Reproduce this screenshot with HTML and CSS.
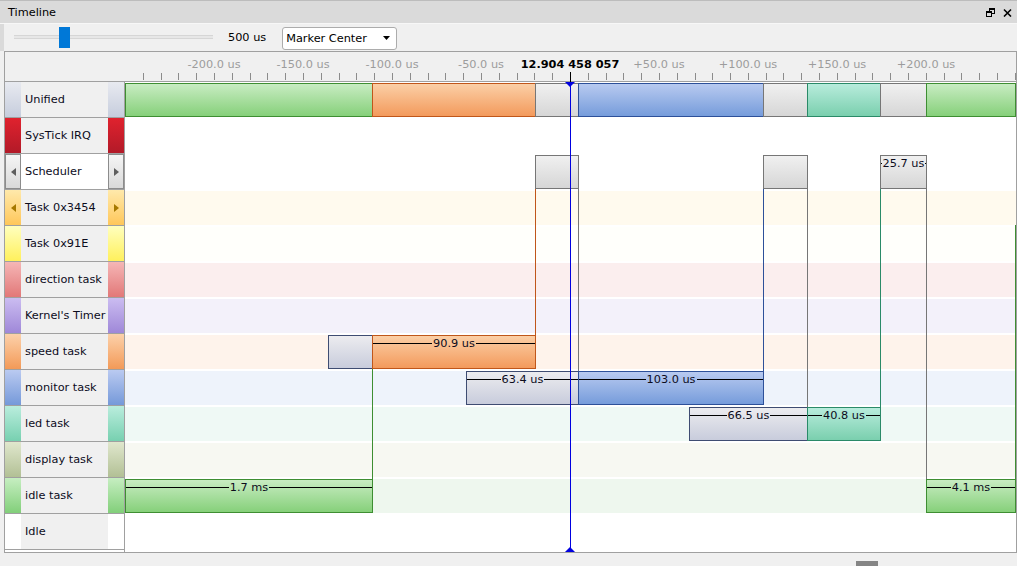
FILE: index.html
```html
<!DOCTYPE html>
<html>
<head>
<meta charset="utf-8">
<title>Timeline</title>
<link rel="stylesheet" href="styles.css">
</head>
<body>
<div class="app">
  <header class="titlebar">
    <span class="title">Timeline</span>
    <span class="win-btns">
      <svg class="ico" width="9" height="9" viewBox="0 0 9 9"><rect x="3.5" y="0.5" width="5" height="5" fill="none" stroke="#000"/><rect x="3" y="0" width="6" height="2" fill="#000"/><rect x="0.5" y="3.5" width="5" height="5" fill="#dadada" stroke="#000"/><rect x="0" y="3" width="6" height="2" fill="#000"/></svg>
      <svg class="ico" width="9" height="9" viewBox="0 0 9 9"><path d="M1 1.5L8 8.5M8 1.5L1 8.5" stroke="#000" stroke-width="1.6" fill="none"/></svg>
    </span>
  </header>

  <div class="toolbar">
    <div class="slider"><div class="thumb" style="margin-left:45px"></div></div>
    <span class="zoom-val">500 us</span>
    <div class="select">
      <span>Marker Center</span>
      <svg width="7" height="4" viewBox="0 0 7 4"><polygon points="0,0 7,0 3.5,4" fill="#000"/></svg>
    </div>
  </div>

  <div class="panel">
    <div class="ruler">
      <div class="ruler-labels">
        <span class="rl">-200.0 us</span>
        <span class="rl">-150.0 us</span>
        <span class="rl">-100.0 us</span>
        <span class="rl">-50.0 us</span>
        <span class="rl now">12.904 458 057</span>
        <span class="rl">+50.0 us</span>
        <span class="rl">+100.0 us</span>
        <span class="rl">+150.0 us</span>
        <span class="rl">+200.0 us</span>
      </div>
      <div class="ruler-ticks">
        <i></i><i></i><i></i><i></i><i></i><i></i><i></i><i></i><i></i><i></i>
        <i></i><i></i><i></i><i></i><i></i><i></i><i></i><i></i><i></i><i></i>
        <i></i><i></i><i></i><i></i><i></i><i></i><i></i><i></i><i></i><i></i>
        <i></i><i></i><i></i><i></i><i></i><i></i><i></i><i></i><i></i><i></i>
        <i></i><i></i><i></i><i></i><i></i><i></i><i></i><i></i><i></i><i></i>
      </div>
      <div class="ruler-marker"></div>
    </div>

    <div class="body">
      <div class="labels">
        <div class="lrow s-unified"><i class="strip"></i><span class="name">Unified</span><i class="strip"></i></div>
        <div class="lrow s-systick"><i class="strip"></i><span class="name">SysTick IRQ</span><i class="strip"></i></div>
        <div class="lrow s-sched sel"><i class="strip boxed"><svg width="5" height="8" viewBox="0 0 5 8"><polygon points="5,0 5,8 0,4" fill="#5e5e5e"/></svg></i><span class="name">Scheduler</span><i class="strip boxed"><svg width="5" height="8" viewBox="0 0 5 8"><polygon points="0,0 0,8 5,4" fill="#5e5e5e"/></svg></i></div>
        <div class="lrow s-task1"><i class="strip"><svg width="5" height="8" viewBox="0 0 5 8"><polygon points="5,0 5,8 0,4" fill="#a57800"/></svg></i><span class="name">Task 0x3454</span><i class="strip"><svg width="5" height="8" viewBox="0 0 5 8"><polygon points="0,0 0,8 5,4" fill="#a57800"/></svg></i></div>
        <div class="lrow s-task2"><i class="strip"></i><span class="name">Task 0x91E</span><i class="strip"></i></div>
        <div class="lrow s-dir"><i class="strip"></i><span class="name">direction task</span><i class="strip"></i></div>
        <div class="lrow s-kern"><i class="strip"></i><span class="name">Kernel's Timer</span><i class="strip"></i></div>
        <div class="lrow s-speed"><i class="strip"></i><span class="name">speed task</span><i class="strip"></i></div>
        <div class="lrow s-mon"><i class="strip"></i><span class="name">monitor task</span><i class="strip"></i></div>
        <div class="lrow s-led"><i class="strip"></i><span class="name">led task</span><i class="strip"></i></div>
        <div class="lrow s-disp"><i class="strip"></i><span class="name">display task</span><i class="strip"></i></div>
        <div class="lrow s-idlet"><i class="strip"></i><span class="name">idle task</span><i class="strip"></i></div>
        <div class="lrow s-idle"><i class="strip"></i><span class="name">Idle</span><i class="strip"></i></div>
        <div class="lfill"></div>
      </div>

      <div class="chart">
        <div class="trow">
          <div class="bar c-green" style="left:0;width:248px"></div>
          <div class="bar c-orange" style="left:247px;width:164px"></div>
          <div class="bar c-gray" style="left:410px;width:44px"></div>
          <div class="bar c-blue" style="left:453px;width:186px"></div>
          <div class="bar c-gray" style="left:638px;width:45px"></div>
          <div class="bar c-teal" style="left:682px;width:74px"></div>
          <div class="bar c-gray" style="left:755px;width:47px"></div>
          <div class="bar c-green" style="left:801px;width:90px"></div>
        </div>
        <div class="trow"></div>
        <div class="trow">
          <div class="bar c-gray" style="left:410px;width:44px"></div>
          <div class="bar c-gray" style="left:638px;width:45px"></div>
          <div class="bar c-gray" style="left:755px;width:47px"><div class="lbl"><span>25.7 us</span></div></div>
        </div>
        <div class="trow b-task1"></div>
        <div class="trow b-task2"></div>
        <div class="trow b-dir"></div>
        <div class="trow b-kern"></div>
        <div class="trow b-speed">
          <div class="bar c-slate" style="left:203px;width:45px"></div>
          <div class="bar c-orange" style="left:247px;width:164px"><div class="lbl"><span>90.9 us</span></div></div>
        </div>
        <div class="trow b-mon">
          <div class="bar c-slate" style="left:341px;width:113px"><div class="lbl"><span>63.4 us</span></div></div>
          <div class="bar c-blue" style="left:453px;width:186px"><div class="lbl"><span>103.0 us</span></div></div>
        </div>
        <div class="trow b-led">
          <div class="bar c-slate" style="left:564px;width:119px"><div class="lbl"><span>66.5 us</span></div></div>
          <div class="bar c-teal" style="left:682px;width:74px"><div class="lbl"><span>40.8 us</span></div></div>
        </div>
        <div class="trow b-disp"></div>
        <div class="trow b-idlet">
          <div class="bar c-green" style="left:0;width:248px"><div class="lbl"><span>1.7 ms</span></div></div>
          <div class="bar c-green" style="left:801px;width:90px"><div class="lbl"><span>4.1 ms</span></div></div>
        </div>
        <div class="trow"></div>

        <div class="conn k-orange" style="left:410px;top:107px;height:146px"></div>
        <div class="conn k-gray" style="left:453px;top:107px;height:182px"></div>
        <div class="conn k-blue" style="left:638px;top:107px;height:182px"></div>
        <div class="conn k-gray" style="left:682px;top:107px;height:218px"></div>
        <div class="conn k-teal" style="left:755px;top:107px;height:218px"></div>
        <div class="conn k-gray" style="left:801px;top:107px;height:290px"></div>
        <div class="conn k-green" style="left:247px;top:287px;height:110px"></div>
        <div class="conn k-green" style="left:890px;top:143px;height:254px"></div>

        <div class="marker" style="left:445px"></div>
      </div>
    </div>
  </div>

  <div class="statusbar"><div class="hthumb"></div></div>
</div>
</body>
</html>
```

FILE: styles.css
```css
* { box-sizing: border-box; }
html, body { margin: 0; padding: 0; }
body {
  width: 1017px;
  height: 566px;
  overflow: hidden;
  background: #f0f0f0;
  font-family: "DejaVu Sans", Verdana, sans-serif;
  font-size: 11.3px;
  color: #000;
}
.app { display: flex; flex-direction: column; height: 566px; }

/* title bar */
.titlebar {
  flex: none;
  height: 24px;
  background: #dadada;
  border-top: 1px solid #bcbcbc;
  border-bottom: 1px solid #f7f7f7;
  display: flex;
  align-items: center;
  justify-content: space-between;
  padding: 0 5px 0 8px;
}
.title { color: #000; }
.win-btns { display: flex; align-items: center; gap: 8px; padding-top: 1px; }
.ico { display: block; }

/* toolbar */
.toolbar {
  flex: none;
  height: 27px;
  display: flex;
  align-items: center;
  border-left: 4px solid #dadada;
  padding-left: 10px;
}
.slider {
  width: 199px;
  height: 21px;
  display: flex;
  background: linear-gradient(to bottom,
    transparent 8px, #d6d6d6 8px, #d6d6d6 9px,
    #e7e7e7 9px, #e7e7e7 11px, #d6d6d6 11px, #d6d6d6 12px, transparent 12px);
}
.thumb { width: 11px; height: 21px; background: #0078d7; }
.zoom-val { margin-left: 15px; }
.select {
  margin-left: 16px;
  margin-top: 1px;
  width: 115px;
  height: 23px;
  background: #fff;
  border: 1px solid #acacac;
  border-radius: 3px;
  display: flex;
  align-items: center;
  justify-content: space-between;
  padding: 0 6px 0 3px;
}
.select svg { display: block; }

/* main panel */
.panel {
  flex: none;
  width: 1013px;
  height: 502px;
  margin-left: 4px;
  border: 1px solid #a0a0a0;
  background: #fff;
  display: flex;
  flex-direction: column;
}
.ruler {
  flex: none;
  height: 30px;
  position: relative;
  background: #f0f0f0;
  border-bottom: 1px solid #a0a0a0;
  padding-top: 4px;
}
.ruler-labels {
  display: flex;
  height: 17px;
  line-height: 17px;
  margin-left: 164.5px;
  color: #9c9c9c;
}
.rl {
  flex: none;
  width: 89px;
  display: flex;
  justify-content: center;
  white-space: nowrap;
}
.rl.now { color: #000; font-weight: bold; }
.ruler-ticks {
  display: flex;
  height: 7px;
  margin-left: 137.8px;
  overflow: hidden;
}
.ruler-ticks i {
  flex: none;
  width: 17.8px;
  height: 7px;
  border-left: 1px solid #8c8c8c;
}
.ruler-marker {
  position: absolute;
  left: 565px;
  top: 20px;
  width: 1px;
  height: 10px;
  background: #000;
}

.body { flex: 1; display: flex; min-height: 0; }

/* label column */
.labels {
  flex: none;
  width: 120px;
  border-right: 1px solid #a0a0a0;
  background: #fff;
  display: flex;
  flex-direction: column;
}
.lrow {
  flex: none;
  height: 36px;
  display: flex;
  border-bottom: 1px solid #a0a0a0;
}
.strip {
  flex: none;
  width: 16px;
  display: flex;
  align-items: center;
  justify-content: center;
}
.strip svg { display: block; }
.strip.boxed { border: 1px solid #8c8c8c; }
.name {
  flex: 1;
  min-width: 0;
  display: flex;
  align-items: center;
  padding-left: 4px;
  white-space: nowrap;
  overflow: hidden;
  background: #f0f0f0;
  color: #0c0c1c;
}
.sel .name { background: #fff; }
.lfill { flex: 1; background: #fff; }

.s-unified .strip { background: linear-gradient(#e8eaf0, #c6cddd); }
.s-systick .strip { background: linear-gradient(#e0222e, #b21a28); }
.s-sched .strip { background: linear-gradient(#f5f5f5, #d9d9d9); }
.s-task1 .strip { background: linear-gradient(#ffe9ab, #ffc75a); }
.s-task2 .strip { background: linear-gradient(#ffffbe, #fff05c); }
.s-dir .strip { background: linear-gradient(#f5b6b6, #e27878); }
.s-kern .strip { background: linear-gradient(#cbbcf1, #9f88d8); }
.s-speed .strip { background: linear-gradient(#fcd1aa, #f39a58); }
.s-mon .strip { background: linear-gradient(#bacaf1, #7599d9); }
.s-led .strip { background: linear-gradient(#baeddd, #77d0b0); }
.s-disp .strip { background: linear-gradient(#e0e7cd, #b2c095); }
.s-idlet .strip { background: linear-gradient(#c6eec1, #82cf7a); }
.s-idle .strip { background: #fff; }

/* chart */
.chart {
  flex: 1;
  min-width: 0;
  position: relative;
  overflow: hidden;
  background: #fff;
}
.trow {
  height: 36px;
  position: relative;
  background: linear-gradient(var(--band, #fff), var(--band, #fff)) 0 1px / 100% 34px no-repeat;
}
.b-task1 { --band: #fffaee; }
.b-task2 { --band: #fffffb; }
.b-dir { --band: #fbeeee; }
.b-kern { --band: #f3f1fa; }
.b-speed { --band: #fef3eb; }
.b-mon { --band: #eef3fb; }
.b-led { --band: #eff9f5; }
.b-disp { --band: #f7f8f2; }
.b-idlet { --band: #eef7ee; }

.bar {
  position: absolute;
  top: 1px;
  height: 34px;
  border: 1px solid;
  overflow: hidden;
}
.c-green { background: linear-gradient(#c8ecc2, #86d07a); border-color: #3e8e32; }
.c-orange { background: linear-gradient(#fbcfa6, #f39a5c); border-color: #c0561a; }
.c-gray { background: linear-gradient(#f0f0f0, #d6d6d6); border-color: #767676; }
.c-blue { background: linear-gradient(#b8caf0, #769cdb); border-color: #2d5099; }
.c-teal { background: linear-gradient(#b8ecdc, #7acfae); border-color: #2a8a68; }
.c-slate { background: linear-gradient(#ececef, #c8ccdc); border-color: #3e4c72; }

.lbl {
  display: flex;
  align-items: center;
  height: 15px;
  line-height: 15px;
  white-space: nowrap;
  color: #0c0c1c;
}
.lbl::before, .lbl::after {
  content: "";
  flex: 1;
  min-width: 0;
  height: 1px;
  background: #000;
}
.lbl span { flex: none; padding: 0 1px; }

.conn { position: absolute; width: 1px; }
.k-orange { background: #c0561a; }
.k-gray { background: #767676; }
.k-blue { background: #2d5099; }
.k-teal { background: #2a8a68; }
.k-green { background: #3e8e32; }

.marker {
  position: absolute;
  top: 0;
  bottom: 0;
  width: 1px;
  background: #0000e0;
}
.marker::before, .marker::after {
  content: "";
  position: absolute;
  left: -5px;
  width: 0;
  height: 0;
  border-left: 5.5px solid transparent;
  border-right: 5.5px solid transparent;
}
.marker::before { top: 0; border-top: 5px solid #0000e0; }
.marker::after { bottom: 0; border-bottom: 5px solid #0000e0; }

/* bottom strip with scrollbar thumb */
.statusbar {
  flex: none;
  height: 13px;
  padding: 8px 0 0 856px;
}
.hthumb { width: 22px; height: 5px; background: #858585; }
```
